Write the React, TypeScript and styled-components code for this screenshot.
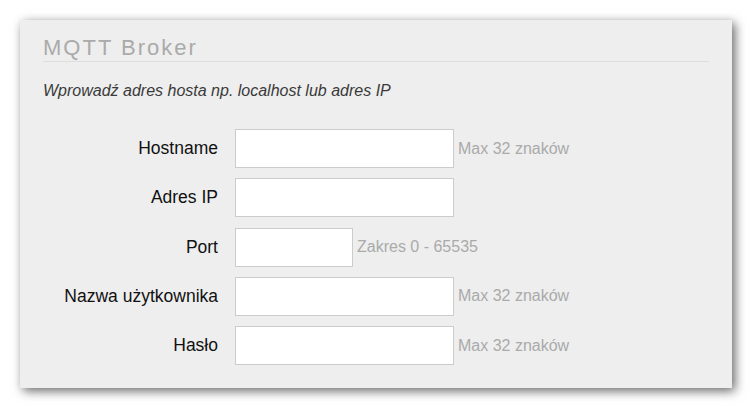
import React from "react";
import styled, { createGlobalStyle } from "styled-components";

const Global = createGlobalStyle`
  html, body { margin: 0; padding: 0; background: #ffffff; }
  body { font-family: "Liberation Sans", Arial, sans-serif; }
`;

const Page = styled.div`
  padding: 20px;
`;

const Panel = styled.section`
  background: #eeeeee;
  box-shadow: 3px 3px 10px rgba(0, 0, 0, 0.6);
  padding: 15px 23px 23px 23px;
`;

const Title = styled.h2`
  margin: 0;
  font-size: 22px;
  line-height: 25px;
  font-weight: normal;
  letter-spacing: 2px;
  color: #aaaaaa;
  padding-bottom: 1px;
  border-bottom: 1px solid #dddddd;
`;

const Intro = styled.p`
  margin: 20px 0 0 0;
  font-size: 16px;
  line-height: 18px;
  font-style: italic;
  color: #3a3a3a;
`;

const Form = styled.div`
  margin-top: 29px;
  display: grid;
  grid-template-columns: 175px auto;
  column-gap: 17px;
  row-gap: 10.25px;
  align-items: center;
`;

const Label = styled.label`
  text-align: right;
  font-size: 17.5px;
  color: #111111;
`;

const Field = styled.div`
  display: flex;
  align-items: center;
  gap: 4px;
`;

const Input = styled.input<{ $w: number }>`
  box-sizing: border-box;
  width: ${(p) => p.$w}px;
  height: 39px;
  margin: 0;
  border: 1px solid #cccccc;
  background: #ffffff;
  outline: none;
  font-family: "Liberation Sans", Arial, sans-serif;
  font-size: 16px;
  padding: 0 6px;
`;

const Hint = styled.span`
  font-size: 16px;
  color: #aaaaaa;
`;

const rows: { label: string; w: number; hint?: string; type?: string }[] = [
  { label: "Hostname", w: 219, hint: "Max 32 znaków" },
  { label: "Adres IP", w: 219 },
  { label: "Port", w: 118, hint: "Zakres 0 - 65535" },
  { label: "Nazwa użytkownika", w: 219, hint: "Max 32 znaków" },
  { label: "Hasło", w: 219, hint: "Max 32 znaków", type: "password" },
];

export default function App() {
  return (
    <>
      <Global />
      <Page>
        <Panel>
          <Title>MQTT Broker</Title>
          <Intro>Wprowadź adres hosta np. localhost lub adres IP</Intro>
          <Form>
            {rows.map((r) => (
              <React.Fragment key={r.label}>
                <Label>{r.label}</Label>
                <Field>
                  <Input $w={r.w} type={r.type ?? "text"} />
                  {r.hint && <Hint>{r.hint}</Hint>}
                </Field>
              </React.Fragment>
            ))}
          </Form>
        </Panel>
      </Page>
    </>
  );
}
